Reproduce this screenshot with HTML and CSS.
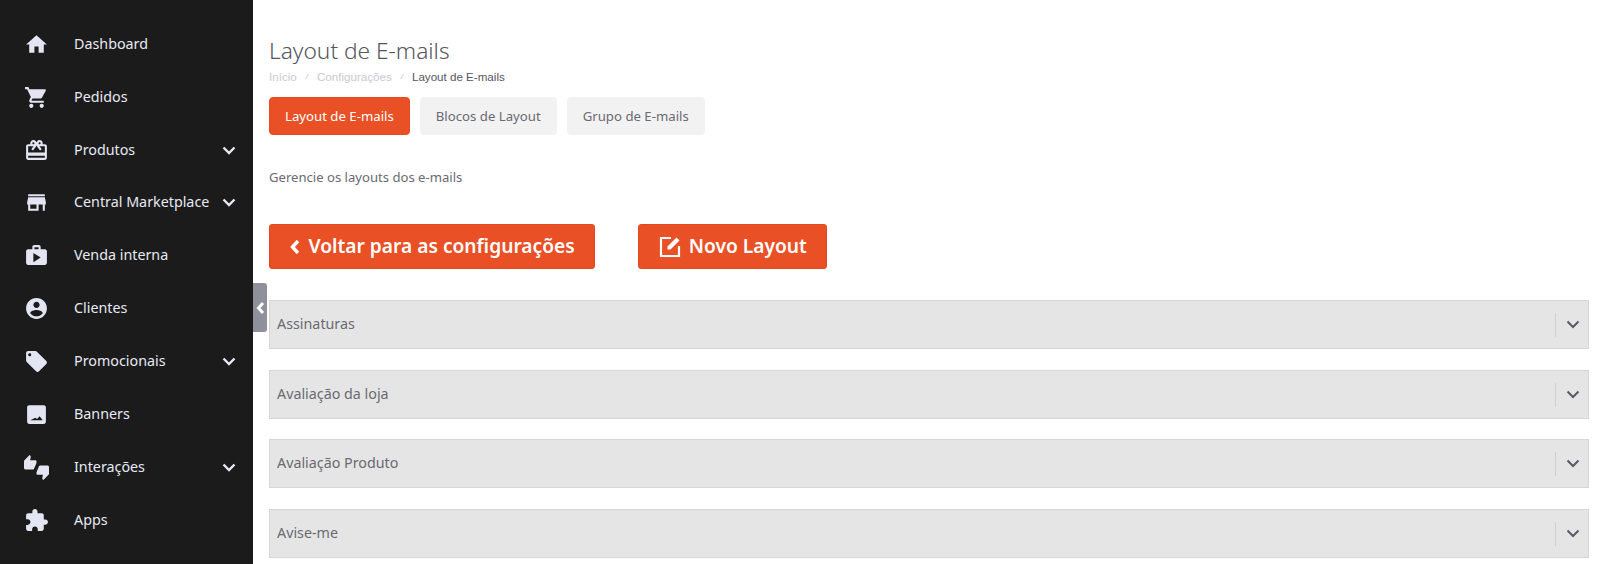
FILE: index.html
```html
<!DOCTYPE html>
<html lang="pt-BR">

<head>
    <meta charset="utf-8" />
    <title>Layout de E-mails</title>
    <link rel="stylesheet" href="styles.css">
</head>

<body>
    <div class="sidebar">
        <a class="item" href="#">
            <svg class="icon" viewBox="0 0 24 24"><path d="M10 20v-6h4v6h5v-8h3L12 3 2 12h3v8z"/></svg>
            <span class="label">Dashboard</span>
        </a>
        <a class="item" href="#">
            <svg class="icon" viewBox="0 0 24 24"><path d="M7 18c-1.1 0-1.99.9-1.99 2S5.9 22 7 22s2-.9 2-2-.9-2-2-2zM1 2v2h2l3.6 7.59-1.35 2.45c-.16.28-.25.61-.25.96 0 1.1.9 2 2 2h12v-2H7.42c-.14 0-.25-.11-.25-.25l.03-.12.9-1.63h7.45c.75 0 1.41-.41 1.75-1.03l3.58-6.49c.08-.14.12-.31.12-.48 0-.55-.45-1-1-1H5.21l-.94-2H1zm16 16c-1.1 0-1.99.9-1.99 2s.89 2 1.99 2 2-.9 2-2-.9-2-2-2z"/></svg>
            <span class="label">Pedidos</span>
        </a>
        <a class="item" href="#">
            <svg class="icon" viewBox="0 0 24 24"><path d="M20 6h-2.18c.11-.31.18-.65.18-1 0-1.66-1.34-3-3-3-1.05 0-1.96.54-2.5 1.35l-.5.67-.5-.68C10.96 2.54 10.05 2 9 2 7.34 2 6 3.34 6 5c0 .35.07.69.18 1H4c-1.11 0-1.99.89-1.99 2L2 19c0 1.11.89 2 2 2h16c1.11 0 2-.89 2-2V8c0-1.11-.89-2-2-2zm-5-2c.55 0 1 .45 1 1s-.45 1-1 1-1-.45-1-1 .45-1 1-1zM9 4c.55 0 1 .45 1 1s-.45 1-1 1-1-.45-1-1 .45-1 1-1zm11 15H4v-2h16v2zm0-5H4V8h5.08L7 10.83 8.62 12 11 8.76l1-1.36 1 1.36L15.38 12 17 10.83 14.92 8H20v6z"/></svg>
            <span class="label">Produtos</span>
            <svg class="arrow" viewBox="0 0 14 9"><path d="M1.5 1.5 7 7l5.5-5.5"/></svg>
        </a>
        <a class="item" href="#">
            <svg class="icon" viewBox="0 0 24 24"><path d="M20 4H4v2h16V4zm1 10v-2l-1-5H4l-1 5v2h1v6h10v-6h4v6h2v-6h1zm-9 4H6v-4h6v4z"/></svg>
            <span class="label">Central Marketplace</span>
            <svg class="arrow" viewBox="0 0 14 9"><path d="M1.5 1.5 7 7l5.5-5.5"/></svg>
        </a>
        <a class="item" href="#">
            <svg class="icon" viewBox="0 0 24 24"><path fill-rule="evenodd" d="M20 6h-4V4c0-1.11-.89-2-2-2h-4c-1.11 0-2 .89-2 2v2H4c-1.11 0-1.99.89-1.99 2L2 19c0 1.11.89 2 2 2h16c1.11 0 2-.89 2-2V8c0-1.11-.89-2-2-2zM10 4h4v2h-4V4zm-1 14.5v-9l7 4.5z"/></svg>
            <span class="label">Venda interna</span>
        </a>
        <a class="item" href="#">
            <svg class="icon" viewBox="0 0 24 24"><path fill-rule="evenodd" d="M12 2C6.48 2 2 6.48 2 12s4.48 10 10 10 10-4.48 10-10S17.52 2 12 2zm0 3.5c1.66 0 3 1.34 3 3s-1.34 3-3 3-3-1.34-3-3 1.34-3 3-3zm0 14c-2.5 0-4.71-1.1-6-3 .03-1.99 4-3.08 6-3.08 1.99 0 5.97 1.09 6 3.08-1.29 1.9-3.5 3-6 3z"/></svg>
            <span class="label">Clientes</span>
        </a>
        <a class="item" href="#">
            <svg class="icon" viewBox="0 0 24 24"><path d="M21.41 11.58l-9-9C12.05 2.22 11.55 2 11 2H4c-1.1 0-2 .9-2 2v7c0 .55.22 1.05.59 1.42l9 9c.36.36.86.58 1.41.58.55 0 1.05-.22 1.41-.59l7-7c.37-.36.59-.86.59-1.41 0-.55-.23-1.06-.59-1.42zM5.5 7C4.67 7 4 6.33 4 5.5S4.67 4 5.5 4 7 4.67 7 5.5 6.33 7 5.5 7z"/></svg>
            <span class="label">Promocionais</span>
            <svg class="arrow" viewBox="0 0 14 9"><path d="M1.5 1.5 7 7l5.5-5.5"/></svg>
        </a>
        <a class="item" href="#">
            <svg class="icon" viewBox="0 0 24 24"><path fill-rule="evenodd" d="M5 3h14c1.1 0 2 .9 2 2v14c0 1.1-.9 2-2 2H5c-1.1 0-2-.9-2-2V5c0-1.1.9-2 2-2zM6 17.5h12l-3-3.8-2.5 2.7-1.6-1.4z"/></svg>
            <span class="label">Banners</span>
        </a>
        <a class="item" href="#">
            <svg class="icon" viewBox="0 0 24 24"><path d="M12 6c0-.55-.45-1-1-1H5.82l.66-3.18.02-.23c0-.31-.13-.59-.33-.8L5.38 0 .44 4.94C.17 5.21 0 5.59 0 6v6.5c0 .83.67 1.5 1.5 1.5h6.75c.62 0 1.15-.38 1.38-.91l2.26-5.29c.07-.17.11-.36.11-.55V6zm10.5 4h-6.75c-.62 0-1.15.38-1.38.91l-2.26 5.29c-.07.17-.11.36-.11.55V18c0 .55.45 1 1 1h5.18l-.66 3.18-.02.24c0 .31.13.59.33.8l.79.78 4.94-4.94c.27-.27.44-.65.44-1.06v-6.5c0-.83-.67-1.5-1.5-1.5z"/></svg>
            <span class="label">Interações</span>
            <svg class="arrow" viewBox="0 0 14 9"><path d="M1.5 1.5 7 7l5.5-5.5"/></svg>
        </a>
        <a class="item" href="#">
            <svg class="icon" viewBox="0 0 24 24"><path d="M20.5 11H19V7c0-1.1-.9-2-2-2h-4V3.5C13 2.12 11.88 1 10.5 1S8 2.12 8 3.5V5H4c-1.1 0-1.99.9-1.99 2v3.8H3.5c1.49 0 2.7 1.21 2.7 2.7s-1.21 2.7-2.7 2.7H2V20c0 1.1.9 2 2 2h3.8v-1.5c0-1.49 1.21-2.7 2.7-2.7 1.49 0 2.7 1.21 2.7 2.7V22H17c1.1 0 2-.9 2-2v-4h1.5c1.38 0 2.5-1.12 2.5-2.5S21.88 11 20.5 11z"/></svg>
            <span class="label">Apps</span>
        </a>
        <a class="toggle" href="#">
            <svg viewBox="0 0 9 14"><path d="M7 2 2.5 7 7 12"/></svg>
        </a>
    </div>

    <div class="content">
        <h1 class="title">Layout de E-mails</h1>
        <div class="breadcrumb">
            <a href="#">Início</a>
            <i>/</i>
            <a href="#">Configurações</a>
            <i>/</i>
            <span>Layout de E-mails</span>
        </div>
        <div class="tabs">
            <a class="tab current" href="#">Layout de E-mails</a>
            <a class="tab" href="#">Blocos de Layout</a>
            <a class="tab" href="#">Grupo de E-mails</a>
        </div>
        <p class="desc">Gerencie os layouts dos e-mails</p>
        <div class="actions">
            <a class="btn btn-back" href="#">
                <svg class="btn-back-icon" viewBox="0 0 10 16"><path d="M8 2 2.5 8 8 14"/></svg>
                <span>Voltar para as configurações</span>
            </a>
            <a class="btn btn-new" href="#">
                <svg class="btn-new-icon" viewBox="0 0 24 24"><path class="frame" d="M13 3H3v18h18V11"/><path d="M9.5 14.5v-3l9-9 3 3-9 9z"/></svg>
                <span>Novo Layout</span>
            </a>
        </div>
        <div class="panel">
            <span>Assinaturas</span>
            <svg class="panel-arrow" viewBox="0 0 14 9"><path d="M1.5 1.5 7 7l5.5-5.5"/></svg>
        </div>
        <div class="panel">
            <span>Avaliação da loja</span>
            <svg class="panel-arrow" viewBox="0 0 14 9"><path d="M1.5 1.5 7 7l5.5-5.5"/></svg>
        </div>
        <div class="panel">
            <span>Avaliação Produto</span>
            <svg class="panel-arrow" viewBox="0 0 14 9"><path d="M1.5 1.5 7 7l5.5-5.5"/></svg>
        </div>
        <div class="panel">
            <span>Avise-me</span>
            <svg class="panel-arrow" viewBox="0 0 14 9"><path d="M1.5 1.5 7 7l5.5-5.5"/></svg>
        </div>
    </div>
</body>

</html>
```

FILE: styles.css
```css
* {
    margin: 0;
    padding: 0;
    box-sizing: border-box;
}

body {
    display: flex;
    height: 564px;
    overflow: hidden;
    background-color: #fff;
    font-family: "Noto Sans", "Open Sans", sans-serif;
    color: #5c5c66;
}

a {
    text-decoration: none;
}

.sidebar {
    position: relative;
    flex: none;
    width: 253px;
    padding-top: 18px;
    background-color: #1b1b1b;
}

.item {
    display: flex;
    align-items: center;
    height: 52.85px;
    padding-left: 24px;
    color: #e6e9f4;
    font-size: 14.3px;
}

.icon {
    flex: none;
    width: 25px;
    height: 25px;
    fill: #e3e6f2;
}

.label {
    margin-left: 25px;
    padding-bottom: 2px;
    white-space: nowrap;
}

.arrow {
    flex: none;
    width: 14px;
    height: 9px;
    margin-left: auto;
    margin-right: 17px;
    fill: none;
    stroke: #e6e9f4;
    stroke-width: 2.4;
}

.toggle {
    position: absolute;
    top: 283px;
    left: 253px;
    display: flex;
    align-items: center;
    justify-content: center;
    width: 14px;
    height: 49px;
    background-color: #8e919c;
    border-radius: 0 3px 3px 0;
}

.toggle svg {
    width: 9px;
    height: 14px;
    fill: none;
    stroke: #fff;
    stroke-width: 3;
}

.content {
    flex: 1;
    min-width: 0;
    padding: 36px 11px 0 16px;
}

.title {
    font-size: 22.7px;
    font-weight: 300;
    line-height: 30px;
    color: #55555e;
}

.breadcrumb {
    display: flex;
    align-items: center;
    gap: 9px;
    height: 16px;
    margin-top: 2px;
    font-family: "Liberation Sans", sans-serif;
    font-size: 11.6px;
    color: #55555e;
}

.breadcrumb a {
    color: #c9c9d2;
}

.breadcrumb i {
    font-size: 8px;
    color: #b5b5be;
}

.tabs {
    display: flex;
    gap: 10px;
    margin-top: 13px;
}

.tab {
    display: flex;
    align-items: center;
    justify-content: center;
    height: 38px;
    padding: 0 16px;
    background-color: #f2f2f3;
    border-radius: 4px;
    font-size: 13.2px;
    color: #6a6a72;
}

.tab.current {
    padding: 0 15px;
    background-color: #e95025;
    border: 1px solid #ea4a1c;
    color: #fff;
}

.desc {
    margin-top: 33px;
    font-size: 13.1px;
    line-height: 18px;
    color: #6a6a72;
}

.actions {
    display: flex;
    gap: 43px;
    margin-top: 38px;
}

.btn {
    display: flex;
    align-items: center;
    height: 45px;
    padding: 0 19.5px;
    background-color: #e95025;
    border: 1px solid #e2491f;
    border-radius: 3px;
    font-size: 19.2px;
    font-weight: 600;
    color: #fff;
}

.btn span {
    padding-bottom: 3px;
}

.btn-back-icon {
    width: 10px;
    height: 16px;
    margin-right: 9px;
    fill: none;
    stroke: #fff;
    stroke-width: 3.4;
}

.btn-new-icon {
    width: 24px;
    height: 24px;
    margin-left: -1px;
    margin-right: 7px;
    fill: #fff;
}

.btn-new-icon .frame {
    fill: none;
    stroke: #fff;
    stroke-width: 2.2;
}

.panel {
    position: relative;
    display: flex;
    align-items: center;
    height: 49px;
    margin-top: 20.7px;
    padding: 0 8px 0 7px;
    background-color: #e5e5e5;
    border: 1px solid #d6d6d6;
    font-size: 14.3px;
    color: #6a6a72;
}

.panel span {
    padding-bottom: 2px;
}

.actions + .panel {
    margin-top: 31px;
}

.panel-arrow {
    width: 14px;
    height: 9px;
    margin-left: auto;
    fill: none;
    stroke: #555b66;
    stroke-width: 2;
}

.panel::after {
    content: "";
    position: absolute;
    top: 12px;
    right: 32px;
    width: 1px;
    height: 24px;
    background-color: #cfcfcf;
}
```
